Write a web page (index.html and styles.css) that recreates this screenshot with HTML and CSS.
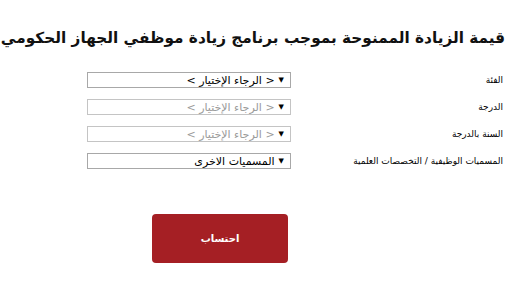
FILE: index.html
```html
<!DOCTYPE html>
<html lang="ar" dir="rtl">
<head>
<meta charset="utf-8">
<link rel="stylesheet" href="styles.css">
</head>
<body>
<div class="page">
  <h1 class="title">قيمة الزيادة الممنوحة بموجب برنامج زيادة موظفي الجهاز الحكومي</h1>
  <form class="form">
    <label class="label">الفئة</label>
    <div class="select"><span class="arrow">▼</span><span class="value">&lt; الرجاء الإختيار &gt;</span></div>
    <label class="label">الدرجة</label>
    <div class="select disabled"><span class="arrow">▼</span><span class="value">&lt; الرجاء الإختيار &gt;</span></div>
    <label class="label">السنة بالدرجة</label>
    <div class="select disabled"><span class="arrow">▼</span><span class="value">&lt; الرجاء الإختيار &gt;</span></div>
    <label class="label">المسميات الوظيفية / التخصصات العلمية</label>
    <div class="select"><span class="arrow">▼</span><span class="value">المسميات الاخرى</span></div>
    <div class="actions"><button type="button" class="btn">احتساب</button></div>
  </form>
</div>
</body>
</html>
```
FILE: styles.css
```css
html, body {
  margin: 0;
  padding: 0;
  background: #ffffff;
}
body {
  font-family: "DejaVu Sans", "Liberation Sans", Arial, sans-serif;
  color: #000;
}
.page {
  padding: 25px 13px 0 4px;
}
.title {
  margin: 0;
  font-size: 15.3px;
  font-weight: bold;
  line-height: 26px;
  color: #111;
  white-space: nowrap;
}
.form {
  display: grid;
  grid-template-columns: 212px 204px;
  align-items: center;
  row-gap: 11px;
  margin-top: 21px;
  padding-right: 2px;
}
.label {
  font-size: 9px;
  line-height: 16px;
  color: #000;
}
.select {
  display: flex;
  align-items: center;
  gap: 4px;
  box-sizing: border-box;
  height: 16px;
  border: 1px solid #a8a8a8;
  padding: 0 6px;
  font-size: 11px;
  color: #000;
  background: #fff;
}
.select.disabled {
  color: #9a9a9a;
  border-color: #c4c4c4;
}
.arrow {
  font-size: 7px;
  color: #000;
}
.actions {
  grid-column: 2;
  padding-right: 3px;
  margin-top: 34px;
}
.btn {
  display: block;
  width: 136px;
  height: 49px;
  border: none;
  border-radius: 4px;
  background: #a51f24;
  color: #fff;
  font-family: "DejaVu Sans", "Liberation Sans", Arial, sans-serif;
  font-size: 10px;
  font-weight: bold;
  padding: 0;
}
```
